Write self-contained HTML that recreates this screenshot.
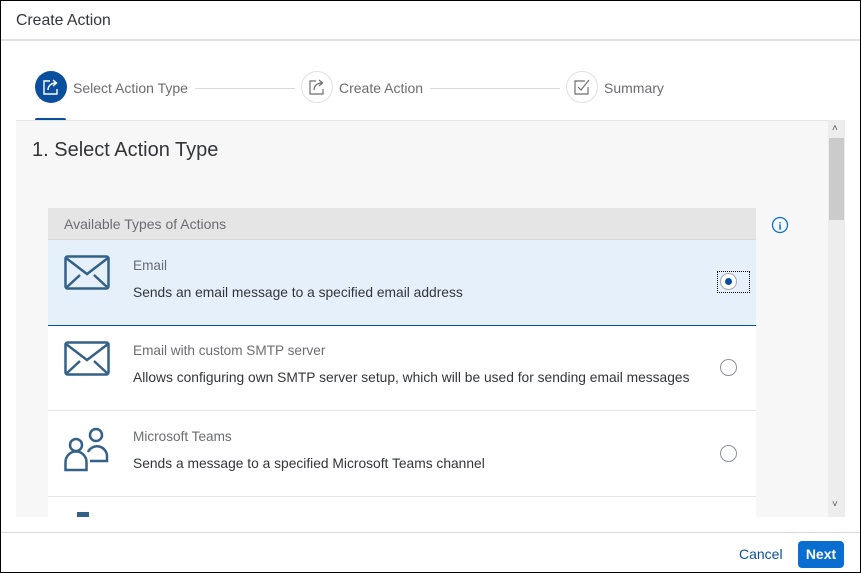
<!DOCTYPE html>
<html><head><style>
*{box-sizing:border-box;margin:0;padding:0}
body{width:861px;height:573px;background:#fff;font-family:"Liberation Sans",Arial,sans-serif;position:relative;overflow:hidden}
.abs{position:absolute}
.t{font-size:14px;color:#6a6d70}
.d{font-size:14px;color:#32363a}
</style></head><body>
<div class="abs" style="left:16px;top:12px;font-size:15.8px;color:#32363a">Create Action</div>
<div class="abs" style="left:0;top:39px;width:861px;height:2px;background:#e0e0e0"></div>

<!-- steps -->
<div class="abs" style="left:35px;top:71px;width:32px;height:32px;border-radius:50%;background:#0a4e9e"></div>
<svg class="abs" style="left:42px;top:78px" width="18" height="18" viewBox="0 0 18 18" fill="none" stroke="#fff" stroke-width="1.4"><path d="M8 3H2v13h13v-5"/><path d="M6 12c0-4 3-7 8-7"/><path d="M11 2l3.5 3L11 8"/></svg>
<div class="abs t" style="left:73px;top:80px;color:#6a6d70">Select Action Type</div>
<div class="abs" style="left:195px;top:88px;width:100px;height:1px;background:#d9d9d9"></div>
<div class="abs" style="left:35px;top:118px;width:31px;height:3px;background:#0a4e9e;border-radius:2px 2px 0 0"></div>

<div class="abs" style="left:301px;top:71px;width:32px;height:32px;border-radius:50%;border:1px solid #e0e0e0;background:#fff"></div>
<svg class="abs" style="left:308px;top:78px" width="18" height="18" viewBox="0 0 18 18" fill="none" stroke="#6a6d70" stroke-width="1.2"><path d="M8 3H2v13h13v-5"/><path d="M6 12c0-4 3-7 8-7"/><path d="M11 2l3.5 3L11 8"/></svg>
<div class="abs t" style="left:339px;top:80px">Create Action</div>
<div class="abs" style="left:430px;top:88px;width:130px;height:1px;background:#d9d9d9"></div>

<div class="abs" style="left:566px;top:71px;width:32px;height:32px;border-radius:50%;border:1px solid #e0e0e0;background:#fff"></div>
<svg class="abs" style="left:573px;top:78px" width="18" height="18" viewBox="0 0 18 18" fill="none" stroke="#6a6d70" stroke-width="1.2"><path d="M12 3H2v13h13V9"/><path d="M5 9l3 3 8-10"/></svg>
<div class="abs t" style="left:604px;top:80px">Summary</div>

<!-- content -->
<div class="abs" style="left:16px;top:120px;width:812px;height:397px;background:#f7f7f7;border-top:1px solid #e5e5e5"></div>
<div class="abs" style="left:828px;top:120px;width:17px;height:397px;background:#ededed"></div>
<div class="abs" style="left:829px;top:138px;width:15px;height:82px;background:#cbcbcb"></div>
<div class="abs" style="left:832px;top:123px;font-size:10px;color:#555">&#x2C4;</div>
<div class="abs" style="left:832px;top:499px;font-size:10px;color:#555">&#x2C5;</div>

<div class="abs" style="left:32px;top:139px;font-size:20px;color:#32363a">1. Select Action Type</div>

<div class="abs" style="left:48px;top:208px;width:708px;height:32px;background:#e5e5e5;border-bottom:1px solid #d9d9d9"></div>
<div class="abs t" style="left:64px;top:216px">Available Types of Actions</div>
<svg class="abs" style="left:771px;top:216px" width="18" height="18" viewBox="0 0 18 18"><circle cx="9" cy="9" r="7.5" fill="none" stroke="#0a6ed1" stroke-width="1.3"/><text x="9" y="13.5" font-size="11" font-weight="bold" text-anchor="middle" fill="#0a6ed1" font-family="Liberation Serif">i</text></svg>

<!-- row1 -->
<div class="abs" style="left:48px;top:240px;width:708px;height:86px;background:#e5f0fa;border-bottom:1px solid #0a4e9e"></div>
<svg class="abs" style="left:64px;top:255px" width="46" height="36" viewBox="0 0 46 36" fill="none" stroke="#346187" stroke-width="2.5"><rect x="1.5" y="1.5" width="43" height="32" rx="2"/><path d="M2 3l21 16L44 3M3 32l13-12M43 32L30 20"/></svg>
<div class="abs t" style="left:133px;top:258px;font-size:13.6px">Email</div>
<div class="abs d" style="left:133px;top:285px;font-size:13.8px">Sends an email message to a specified email address</div>
<div class="abs" style="left:717px;top:271px;width:33px;height:22px;border:1px dotted #000"></div>
<div class="abs" style="left:720px;top:273px;width:17px;height:17px;border-radius:50%;border:1px solid #aaa;background:#fff"></div>
<div class="abs" style="left:725px;top:278px;width:7px;height:7px;border-radius:50%;background:#0a4e9e"></div>

<!-- row2 -->
<div class="abs" style="left:48px;top:326px;width:708px;height:85px;background:#fff;border-bottom:1px solid #e5e5e5"></div>
<svg class="abs" style="left:64px;top:341px" width="46" height="36" viewBox="0 0 46 36" fill="none" stroke="#346187" stroke-width="2.5"><rect x="1.5" y="1.5" width="43" height="32" rx="2"/><path d="M2 3l21 16L44 3M3 32l13-12M43 32L30 20"/></svg>
<div class="abs t" style="left:133px;top:343px;font-size:13.6px">Email with custom SMTP server</div>
<div class="abs d" style="left:133px;top:370px;font-size:13.8px">Allows configuring own SMTP server setup, which will be used for sending email messages</div>
<div class="abs" style="left:720px;top:359px;width:17px;height:17px;border-radius:50%;border:1px solid #89919a;background:#fff"></div>

<!-- row3 -->
<div class="abs" style="left:48px;top:411px;width:708px;height:86px;background:#fff;border-bottom:1px solid #e5e5e5"></div>
<svg class="abs" style="left:64px;top:426px" width="46" height="46" viewBox="0 0 46 46" fill="none" stroke="#346187" stroke-width="2.5"><circle cx="12" cy="19" r="6"/><path d="M1.5 44V36a10 10 0 0 1 21 0v8z"/><circle cx="32" cy="9" r="6"/><path d="M24 26a10 10 0 0 1 19 5v4h-17"/></svg>
<div class="abs t" style="left:133px;top:429px;font-size:13.6px">Microsoft Teams</div>
<div class="abs d" style="left:133px;top:456px;font-size:13.8px">Sends a message to a specified Microsoft Teams channel</div>
<div class="abs" style="left:720px;top:445px;width:17px;height:17px;border-radius:50%;border:1px solid #89919a;background:#fff"></div>

<div class="abs" style="left:48px;top:497px;width:708px;height:20px;background:#fff"></div>
<div class="abs" style="left:77px;top:512px;width:12px;height:5px;background:#346187"></div>

<!-- footer -->
<div class="abs" style="left:0;top:532px;width:861px;height:1px;background:#d9d9d9"></div>
<div class="abs" style="left:739px;top:546px;font-size:14px;color:#0a4e9e">Cancel</div>
<div class="abs" style="left:798px;top:541px;width:46px;height:27px;background:#0a6ed1;border-radius:4px;color:#fff;font-size:14px;font-weight:bold;text-align:center;line-height:27px">Next</div>

<div class="abs" style="left:0;top:0;width:861px;height:573px;border:1px solid #000"></div>
</body></html>
